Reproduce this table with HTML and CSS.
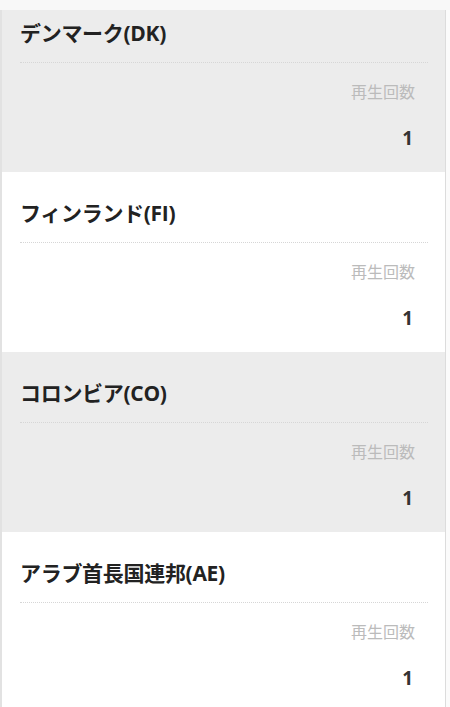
FILE: index.html
```html
<!DOCTYPE html>
<html lang="ja">
<head>
<meta charset="utf-8">
<link rel="stylesheet" href="styles.css">
</head>
<body>
<div class="page">
  <div class="topbar"></div>
  <div class="list">
    <div class="card gray cut">
      <div class="title">デンマーク(DK)</div>
      <div class="label">再生回数</div>
      <div class="value">1</div>
    </div>
    <div class="card">
      <div class="title">フィンランド(FI)</div>
      <div class="label">再生回数</div>
      <div class="value">1</div>
    </div>
    <div class="card gray">
      <div class="title">コロンビア(CO)</div>
      <div class="label">再生回数</div>
      <div class="value">1</div>
    </div>
    <div class="card">
      <div class="title">アラブ首長国連邦(AE)</div>
      <div class="label">再生回数</div>
      <div class="value">1</div>
    </div>
  </div>
</div>
</body>
</html>
```
FILE: styles.css
```css
html, body {
  margin: 0;
  padding: 0;
  background: #fbfbfb;
  font-family: "Open Sans", "Noto Sans CJK JP", sans-serif;
}
.page {
  width: 450px;
  height: 707px;
  overflow: hidden;
}
.topbar {
  height: 10px;
  background: #f8f8f8;
}
.list {
  width: 443px;
  border-left: 2px solid #e2e2e2;
  border-right: 1px solid #dcdcdc;
  background: #fff;
}
.card {
  height: 180px;
  box-sizing: border-box;
  padding: 27px 17px 0 18px;
  display: flex;
  flex-direction: column;
}
.card.cut {
  height: 162px;
  padding-top: 9px;
}
.gray {
  background: #ececec;
}
.title {
  font-size: 21px;
  font-weight: 700;
  color: #222;
  line-height: 28px;
  letter-spacing: -0.3px;
  padding-bottom: 15px;
  border-bottom: 1px dotted #d6d6d6;
}
.label {
  margin-top: 17px;
  padding-right: 13px;
  text-align: right;
  font-size: 16px;
  line-height: 22px;
  color: #bbb;
  font-family: "Noto Sans CJK JP", sans-serif;
}
.value {
  margin-top: 24px;
  padding-right: 15px;
  text-align: right;
  font-size: 19px;
  font-weight: 700;
  line-height: 24px;
  color: #333;
}
```
